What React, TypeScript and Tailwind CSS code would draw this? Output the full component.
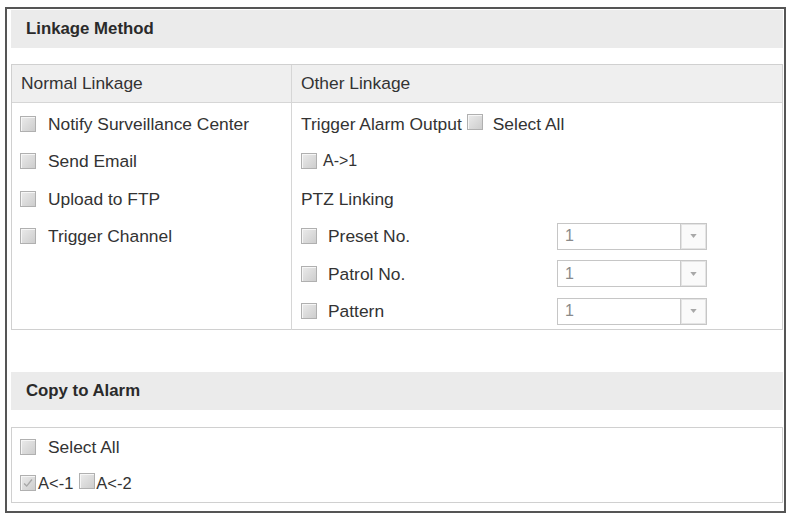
import React from "react";

function Box({ checked = false }: { checked?: boolean }) {
  return (
    <span className="relative inline-block w-[16px] h-[16px] shrink-0 border border-[#b0b0b0] bg-gradient-to-br from-[#ebebeb] to-[#cdcdcd] shadow-[inset_1px_1px_0_#f6f6f6]">
      {checked && (
        <svg viewBox="0 0 16 16" className="absolute inset-0 w-full h-full">
          <path d="M3.5 8.5 L6.5 11.5 L12.5 4" fill="none" stroke="#a8a8a8" strokeWidth="1.6" />
        </svg>
      )}
    </span>
  );
}

function Select() {
  return (
    <div className="flex w-[150px] h-[27px] border border-[#c6c6c6] bg-white">
      <div className="flex-1 flex items-center pl-[7px] text-[16px] text-[#8a8a8a]">1</div>
      <div className="w-[26px] flex items-center justify-center border-l border-[#cacaca] bg-[#fafafa] shadow-[inset_0_0_0_1px_#e4e4e4]">
        <svg viewBox="0 0 8 5" className="w-[7px] h-[4px]">
          <path d="M0 0 L8 0 L4 5 Z" fill="#a8a8a8" />
        </svg>
      </div>
    </div>
  );
}

function Band({ title }: { title: string }) {
  return (
    <div className="h-[38px] bg-[#ebebeb] flex items-center pl-[15px] text-[16.8px] font-bold text-[#2a2a2a]">
      {title}
    </div>
  );
}

const normal = ["Notify Surveillance Center", "Send Email", "Upload to FTP", "Trigger Channel"];
const ptz = ["Preset No.", "Patrol No.", "Pattern"];

export default function App() {
  return (
    <div
      className="w-[787px] h-[515px] bg-white pt-[7px] pl-[5px] text-[#333333]"
      style={{ fontFamily: '"Liberation Sans", Arial, sans-serif' }}
    >
      <div className="w-[781px] h-[506px] border-2 border-[#555555] pl-[4px] pr-[1px] pt-[1px] flex flex-col text-[17.4px]">
        <Band title="Linkage Method" />

        {/* linkage table */}
        <div className="mt-[16px] w-[772px] h-[266px] border border-[#d0d0d0] grid grid-cols-[280px_1fr]">
          <div className="border-r border-[#d6d6d6] flex flex-col">
            <div className="h-[38px] bg-[#efefef] border-b border-[#d6d6d6] flex items-center pl-[9px]">Normal Linkage</div>
            <div className="pt-[2px] pl-[8px]">
              {normal.map((t) => (
                <div key={t} className="h-[37.5px] flex items-center gap-[12px]">
                  <Box />
                  <span>{t}</span>
                </div>
              ))}
            </div>
          </div>
          <div className="flex flex-col">
            <div className="h-[38px] bg-[#efefef] border-b border-[#d6d6d6] flex items-center pl-[9px]">Other Linkage</div>
            <div className="pt-[2px] pl-[9px]">
              <div className="h-[37.5px] flex items-center">
                <span>Trigger Alarm Output</span>
                <span className="ml-[5px]"><Box /></span>
                <span className="ml-[10px]">Select All</span>
              </div>
              <div className="h-[37.5px] flex items-center gap-[6px]">
                <Box />
                <span className="text-[16px]">A-&gt;1</span>
              </div>
              <div className="h-[37.5px] flex items-center">PTZ Linking</div>
              {ptz.map((t) => (
                <div key={t} className="h-[37.5px] flex items-center">
                  <div className="w-[256px] flex items-center gap-[11px]">
                    <Box />
                    <span>{t}</span>
                  </div>
                  <Select />
                </div>
              ))}
            </div>
          </div>
        </div>

        <div className="mt-[42px]">
          <Band title="Copy to Alarm" />
        </div>

        {/* copy box */}
        <div className="mt-[17px] w-[772px] h-[76px] border border-[#d0d0d0] pt-[1px] pl-[8px]">
          <div className="h-[36px] flex items-center gap-[12px]">
            <Box />
            <span>Select All</span>
          </div>
          <div className="h-[36px] flex items-center text-[16.5px]">
            <Box checked />
            <span className="ml-[2px]">A&lt;-1</span>
            <span className="ml-[6px]"><Box /></span>
            <span className="ml-[1px]">A&lt;-2</span>
          </div>
        </div>
      </div>
    </div>
  );
}
